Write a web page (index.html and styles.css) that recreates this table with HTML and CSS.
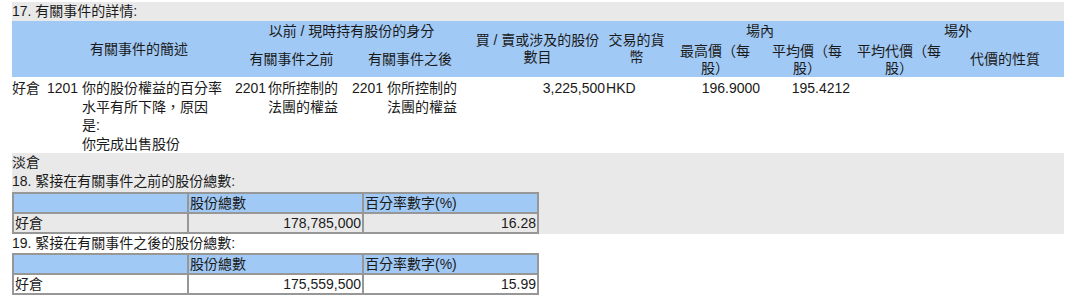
FILE: index.html
```html
<!DOCTYPE html>
<html lang="zh-Hant">
<head>
<meta charset="utf-8">
<title>有關事件的詳情</title>
<link rel="stylesheet" href="styles.css">
</head>
<body>
<div class="page">
  <div class="band title">17. 有關事件的詳情:</div>
  <table class="events">
    <colgroup>
      <col class="c1"><col class="c2"><col class="c3"><col class="c4"><col class="c5"><col class="c6"><col class="c7"><col class="c8"><col class="c9"><col class="c10"><col class="c11"><col class="c12"><col class="c13">
    </colgroup>
    <thead>
      <tr class="h1">
        <th rowspan="2"></th>
        <th colspan="2" rowspan="2">有關事件的簡述</th>
        <th colspan="4">以前 / 現時持有股份的身分</th>
        <th rowspan="2">買 / 賣或涉及的股份<br>數目</th>
        <th rowspan="2">交易的貨<br>幣</th>
        <th colspan="2">場內</th>
        <th colspan="2">場外</th>
      </tr>
      <tr class="h2">
        <th colspan="2">有關事件之前</th>
        <th colspan="2">有關事件之後</th>
        <th>最高價（每<br>股）</th>
        <th>平均價（每<br>股）</th>
        <th>平均代價（每<br>股）</th>
        <th>代價的性質</th>
      </tr>
    </thead>
    <tbody>
      <tr class="data">
        <td class="first">好倉</td>
        <td>1201</td>
        <td>你的股份權益的百分率<br>水平有所下降，原因<br>是:<br>你完成出售股份</td>
        <td>2201</td>
        <td>你所控制的<br>法團的權益</td>
        <td>2201</td>
        <td>你所控制的<br>法團的權益</td>
        <td class="num tight">3,225,500</td>
        <td class="cur">HKD</td>
        <td class="num">196.9000</td>
        <td class="num">195.4212</td>
        <td></td>
        <td></td>
      </tr>
    </tbody>
  </table>

  <div class="band gray">
    <div class="line">淡倉</div>
    <div class="line sub">18. 緊接在有關事件之前的股份總數:</div>
    <table class="totals">
      <tr class="head"><th></th><th>股份總數</th><th>百分率數字(%)</th></tr>
      <tr><td>好倉</td><td class="num">178,785,000</td><td class="num">16.28</td></tr>
    </table>
  </div>

  <div class="band white">
    <div class="line">19. 緊接在有關事件之後的股份總數:</div>
    <table class="totals">
      <tr class="head"><th></th><th>股份總數</th><th>百分率數字(%)</th></tr>
      <tr><td>好倉</td><td class="num">175,559,500</td><td class="num">15.99</td></tr>
    </table>
  </div>
</div>
</body>
</html>
```

FILE: styles.css
```css
* { box-sizing: border-box; }

html, body {
  margin: 0;
  padding: 0;
  background: #ffffff;
}

body {
  font-family: "Liberation Sans", "Noto Sans CJK TC", sans-serif;
  font-size: 14px;
  color: #1a1a1a;
}

.page {
  width: 1052px;
  margin-left: 12px;
  padding-top: 2px;
}

.band.title {
  background: #e9e9e9;
  height: 19px;
  line-height: 19px;
}

.events {
  width: 1052px;
  table-layout: fixed;
  border-collapse: collapse;
  border-spacing: 0;
}

.events .c1 { width: 33px; }
.events .c2 { width: 35px; }
.events .c3 { width: 153px; }
.events .c4 { width: 33px; }
.events .c5 { width: 84px; }
.events .c6 { width: 35px; }
.events .c7 { width: 85px; }
.events .c8 { width: 135px; }
.events .c9 { width: 63px; }
.events .c10 { width: 94px; }
.events .c11 { width: 90px; }
.events .c12 { width: 94px; }
.events .c13 { width: 118px; }

.events th {
  background: #a1c9f5;
  font-weight: normal;
  text-align: center;
  vertical-align: middle;
  padding: 0;
  line-height: 17px;
  white-space: nowrap;
}

.events .h1 th { height: 21px; }
.events .h2 th { height: 35px; }

.events td {
  padding: 2px 2px 0 2px;
  vertical-align: top;
  line-height: 18.5px;
  height: 76px;
  white-space: nowrap;
}

.events td.first { padding-left: 0; }
.events td.num { text-align: right; }
.events td.tight { padding-right: 0; }
.events td.cur { padding-left: 1px; }

.band.gray {
  background: #e9e9e9;
}

.line {
  height: 19px;
  line-height: 19px;
}

.line.sub { height: 20px; }

.totals {
  width: 527px;
  table-layout: fixed;
  border-collapse: collapse;
  border: 2px solid #979797;
}

.totals th,
.totals td {
  border: 2px solid #979797;
  height: 20px;
  padding: 0 1px;
  line-height: 18px;
  text-align: left;
  font-weight: normal;
}

.totals .head th {
  background: #a1c9f5;
}

.totals td.num { text-align: right; }
```
